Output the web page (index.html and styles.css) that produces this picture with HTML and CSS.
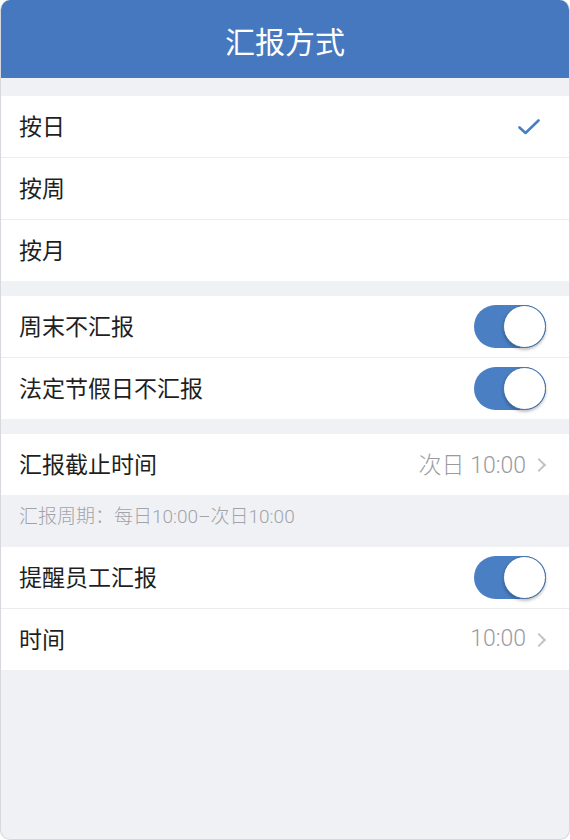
FILE: index.html
```html
<!DOCTYPE html>
<html lang="zh-CN">

<head>
    <meta charset="UTF-8">
    <meta name="viewport" content="width=device-width, initial-scale=1.0">
    <title>汇报方式</title>
    <link rel="stylesheet" href="styles.css">
</head>

<body>
    <div class="phone">
        <header class="title-bar">汇报方式</header>

        <!-- 汇报频率 -->
        <section class="group first">
            <div class="row">
                <span class="label">按日</span>
                <svg class="check" width="22" height="16" viewBox="0 0 22 16">
                    <path d="M1.5 8.5 L7.5 14 L20.5 1.5" fill="none" stroke="#4a7fc4" stroke-width="2.6" stroke-linecap="round" stroke-linejoin="round" />
                </svg>
            </div>
            <div class="row"><span class="label">按周</span></div>
            <div class="row"><span class="label">按月</span></div>
        </section>

        <section class="group">
            <div class="row">
                <span class="label">周末不汇报</span>
                <span class="switch on"><i></i></span>
            </div>
            <div class="row">
                <span class="label">法定节假日不汇报</span>
                <span class="switch on"><i></i></span>
            </div>
        </section>

        <section class="group">
            <div class="row">
                <span class="label">汇报截止时间</span>
                <span class="value">次日 10:00<b class="arrow"></b></span>
            </div>
        </section>
        <p class="note">汇报周期：每日10:00–次日10:00</p>

        <section class="group tight">
            <div class="row">
                <span class="label">提醒员工汇报</span>
                <span class="switch on"><i></i></span>
            </div>
            <div class="row">
                <span class="label">时间</span>
                <span class="value">10:00<b class="arrow"></b></span>
            </div>
        </section>
    </div>
</body>

</html>
```

FILE: styles.css
```css
* {
    margin: 0;
    padding: 0;
    box-sizing: border-box;
}

body {
    width: 570px;
    height: 840px;
    overflow: hidden;
    font-family: "Noto Sans CJK SC", "Noto Sans", sans-serif;
    color: #1f1f1f;
}

.phone {
    width: 570px;
    height: 840px;
    background-color: #f0f1f5;
    border: 1px solid #d6d8dd;
    border-top: none;
    border-radius: 10px;
    overflow: hidden;
}

.title-bar {
    height: 78px;
    background-color: #4578be;
    color: #fff;
    font-size: 30px;
    text-align: center;
    line-height: 80px;
}

.group {
    margin-top: 15px;
    background-color: #fff;
}

.group.first {
    margin-top: 18px;
}

.group.tight {
    margin-top: 0;
}

.row {
    height: 62px;
    display: flex;
    align-items: center;
    justify-content: space-between;
    padding: 0 23px 3px 18px;
    border-bottom: 1px solid #ececf0;
    font-size: 23px;
}

.row:last-child {
    height: 61px;
    border-bottom: none;
}

.check {
    margin-right: 6px;
    margin-top: 4px;
}

/* 开关 */
.switch {
    width: 72px;
    height: 43px;
    border-radius: 22px;
    background-color: #4a7fc4;
    display: flex;
    justify-content: flex-end;
    align-items: center;
    margin-top: 3px;
}

.switch i {
    width: 43px;
    height: 43px;
    border-radius: 50%;
    background-color: #fff;
    border: 1px solid #3f6ea8;
    box-shadow: 0 2px 3px rgba(0, 0, 0, 0.25);
}

/* 数字用拉丁字体 宽一点 */
.value {
    color: #9b9b9f;
    display: flex;
    align-items: center;
    font-family: Roboto, "Noto Sans CJK SC", sans-serif;
    font-weight: 300;
}

.arrow {
    width: 10px;
    height: 10px;
    border-top: 2px solid #c2c3c7;
    border-right: 2px solid #c2c3c7;
    transform: rotate(45deg);
    margin-left: 8px;
    margin-right: 2px;
    margin-top: 3px;
}

.note {
    height: 52px;
    line-height: 44px;
    padding-left: 18px;
    font-size: 19px;
    color: #a2a3a8;
    font-family: Roboto, "Noto Sans CJK SC", sans-serif;
    font-weight: 300;
}
```
